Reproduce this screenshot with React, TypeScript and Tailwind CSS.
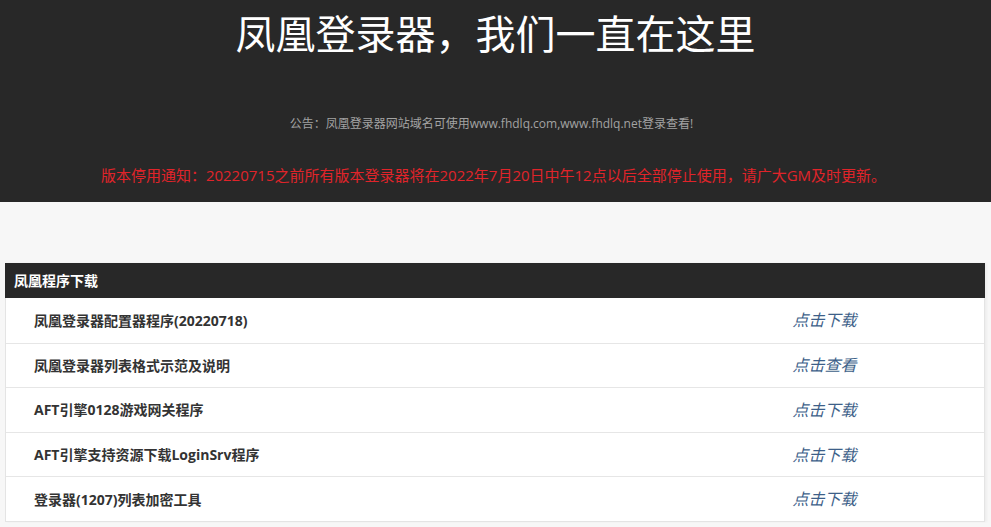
import React from 'react';

const rows = [
  { name: '凤凰登录器配置器程序(20220718)', link: '点击下载' },
  { name: '凤凰登录器列表格式示范及说明', link: '点击查看' },
  { name: 'AFT引擎0128游戏网关程序', link: '点击下载' },
  { name: 'AFT引擎支持资源下载LoginSrv程序', link: '点击下载' },
  { name: '登录器(1207)列表加密工具', link: '点击下载' },
];

export default function App() {
  return (
    <div
      className="min-h-[527px] bg-[#f7f7f7]"
      style={{ fontFamily: '"Open Sans", "Noto Sans CJK SC", sans-serif' }}
    >
      {/* Banner */}
      <div className="h-[202px] bg-[#282828] flex flex-col items-center">
        <h1 className="mt-[9px] text-[40px] leading-[50px] text-white font-normal">
          凤凰登录器，我们一直在这里
        </h1>
        <p className="mt-[57px] text-[12px] leading-[16px] text-[#a3a3a3] -ml-[8px]">
          公告：凤凰登录器网站域名可使用www.fhdlq.com,www.fhdlq.net登录查看!
        </p>
        <p className="mt-[33px] text-[15px] leading-[20px] text-[#e0242a] -ml-[4px]">
          版本停用通知：20220715之前所有版本登录器将在2022年7月20日中午12点以后全部停止使用，请广大GM及时更新。
        </p>
      </div>

      {/* Downloads */}
      <div className="pt-[61px] pl-[5px] pr-[6px]">
        <div className="border border-[#e4e4e4] bg-white shadow-[2px_0_2px_rgba(0,0,0,0.04)]">
          <div className="h-[35px] bg-[#282828] flex items-center px-[9px] -mx-px -mt-px">
            <span className="text-[14px] font-bold text-white">凤凰程序下载</span>
          </div>
          {rows.map((r, i) => (
            <div
              key={i}
              className={`h-[44.6px] flex items-center ${i > 0 ? 'border-t border-[#e6e6e6]' : ''}`}
            >
              <div className="w-[659px] pl-[28px] text-[14px] font-bold text-[#333]">{r.name}</div>
              <div className="flex-1 text-center">
                <a className="text-[16px] italic text-[#3d5f89] cursor-pointer">{r.link}</a>
              </div>
            </div>
          ))}
        </div>
      </div>
    </div>
  );
}
